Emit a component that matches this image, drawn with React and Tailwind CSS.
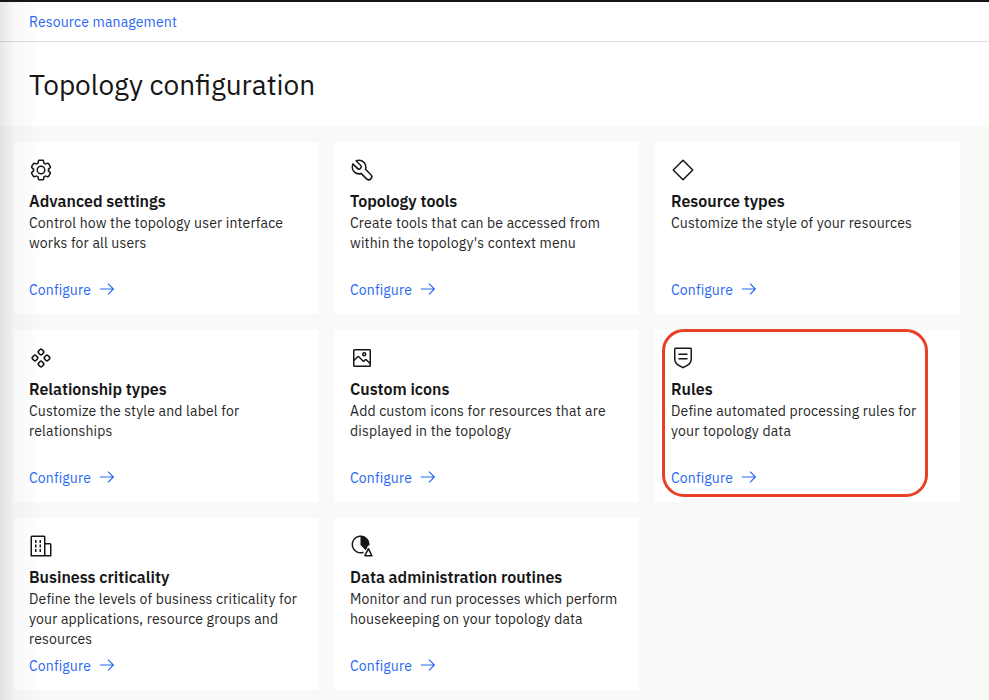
import React from "react";

const SettingsIcon = () => (
  <>
    <path d="M27,16.76c0-.25,0-.5,0-.76s0-.51,0-.77l1.92-1.68A2,2,0,0,0,29.3,11L26.94,7a2,2,0,0,0-1.73-1,2,2,0,0,0-.64.1l-2.43.82a11.35,11.35,0,0,0-1.31-.75l-.51-2.52a2,2,0,0,0-2-1.61H13.64a2,2,0,0,0-2,1.61l-.51,2.52a11.48,11.48,0,0,0-1.32.75L7.43,6.06A2,2,0,0,0,6.79,6,2,2,0,0,0,5.06,7L2.7,11a2,2,0,0,0,.41,2.51L5,15.24c0,.25,0,.5,0,.76s0,.51,0,.77L3.11,18.45A2,2,0,0,0,2.7,21L5.06,25a2,2,0,0,0,1.73,1,2,2,0,0,0,.64-.1l2.43-.82a11.35,11.35,0,0,0,1.31.75l.51,2.52a2,2,0,0,0,2,1.61h4.72a2,2,0,0,0,2-1.61l.51-2.52a11.48,11.48,0,0,0,1.32-.75l2.42.82a2,2,0,0,0,.64.1,2,2,0,0,0,1.73-1L29.3,21a2,2,0,0,0-.41-2.51ZM25.21,24l-3.43-1.16a8.86,8.86,0,0,1-2.71,1.57L18.36,28H13.64l-.71-3.55a9.36,9.36,0,0,1-2.7-1.57L6.79,24,4.43,20l2.72-2.4a8.9,8.9,0,0,1,0-3.13L4.43,12,6.79,8l3.43,1.16a8.86,8.86,0,0,1,2.71-1.57L13.64,4h4.72l.71,3.55a9.36,9.36,0,0,1,2.7,1.57L25.21,8,27.57,12l-2.72,2.4a8.9,8.9,0,0,1,0,3.13L27.57,20Z" />
    <path d="M16,22a6,6,0,1,1,6-6A5.94,5.94,0,0,1,16,22Zm0-10a3.91,3.91,0,0,0-4,4,3.91,3.91,0,0,0,4,4,3.91,3.91,0,0,0,4-4A3.91,3.91,0,0,0,16,12Z" />
  </>
);

const ToolsIcon = () => (
  <path d="M12.1,2A9.8,9.8,0,0,0,6.7,3.6L13.1,10a2.1,2.1,0,0,1,.2,3,2.1,2.1,0,0,1-3-.2L3.7,6.4A9.84,9.84,0,0,0,2,12.1,10.14,10.14,0,0,0,12.1,22.2a10.9,10.9,0,0,0,2.6-.3l6.7,6.7a5,5,0,0,0,7.1-7.1l-6.7-6.7a10.9,10.9,0,0,0,.3-2.6A10,10,0,0,0,12.1,2Zm8,10.1a7.61,7.61,0,0,1-.3,2.1l-.3,1.1.8.8,6.7,6.7a2.88,2.88,0,0,1,.9,2.1A2.72,2.72,0,0,1,27,27a2.9,2.9,0,0,1-4.2,0l-6.7-6.7-.8-.8-1.1.3a7.61,7.61,0,0,1-2.1.3,8.27,8.27,0,0,1-5.7-2.3A7.63,7.63,0,0,1,4,12.1a8.33,8.33,0,0,1,.3-2.2l4.4,4.4a4.14,4.14,0,0,0,5.9.2,4.14,4.14,0,0,0-.2-5.9L10,4.2a6.45,6.45,0,0,1,2-.3,8.27,8.27,0,0,1,5.7,2.3A8.49,8.49,0,0,1,20.1,12.1Z" />
);

const DiamondIcon = () => (
  <path d="M16 3 29 16 16 29 3 16Z" fill="none" stroke="currentColor" strokeWidth="2" strokeLinejoin="round" />
);

const ClusterIcon = () => (
  <g fill="none" stroke="currentColor" strokeWidth="2.1">
    <rect x="12.8" y="4.8" width="6.4" height="6.4" rx="1.7" transform="rotate(45 16 8)" />
    <rect x="4.8" y="12.8" width="6.4" height="6.4" rx="1.7" transform="rotate(45 8 16)" />
    <rect x="20.8" y="12.8" width="6.4" height="6.4" rx="1.7" transform="rotate(45 24 16)" />
    <rect x="12.8" y="20.8" width="6.4" height="6.4" rx="1.7" transform="rotate(45 16 24)" />
  </g>
);

const ImageIcon = () => (
  <>
    <path d="M19,14a3,3,0,1,0-3-3A3,3,0,0,0,19,14Zm0-4a1,1,0,1,1-1,1A1,1,0,0,1,19,10Z" />
    <path d="M26,4H6A2,2,0,0,0,4,6V26a2,2,0,0,0,2,2H26a2,2,0,0,0,2-2V6A2,2,0,0,0,26,4Zm0,22H6V20l5-5,5.59,5.59a2,2,0,0,0,2.82,0L21,19l5,5Zm0-4.83-3.59-3.59a2,2,0,0,0-2.82,0L18,19.17l-5.59-5.59a2,2,0,0,0-2.82,0L6,17.17V6H26Z" />
  </>
);

const RuleIcon = () => (
  <>
    <path d="M10 10H22V12H10zM10 16H22V18H10z" />
    <path d="M16,30,9.8242,26.7071A10.9818,10.9818,0,0,1,4,17V4A2.0021,2.0021,0,0,1,6,2H26a2.0021,2.0021,0,0,1,2,2V17a10.9818,10.9818,0,0,1-5.8242,9.7071ZM6,4V17a8.9852,8.9852,0,0,0,4.7656,7.9423L16,27.7333l5.2344-2.791A8.9852,8.9852,0,0,0,26,17V4Z" />
  </>
);

const BuildingIcon = () => (
  <>
    <path d="M8 8h2v4H8zM8 14h2v4H8zM14 8h2v4h-2zM14 14h2v4h-2zM8 20h2v4H8zM14 20h2v4h-2z" />
    <path d="M30,14a2,2,0,0,0-2-2H22V4a2,2,0,0,0-2-2H4A2,2,0,0,0,2,4V30H30ZM4,4H20V28H4ZM22,28V14h6V28Z" />
  </>
);

const PieIcon = () => (
  <>
    <path d="M18 24.3A11 11 0 1 1 25 14" fill="none" stroke="currentColor" strokeWidth="2" />
    <path d="M14 2.5A11.7 11.7 0 0 1 25.9 14Q25.7 16.8 24.4 18.6L20.8 21.6L14 14.5Z" />
    <path d="M24.5 19.5 29.2 29H19.8Z" fill="none" stroke="#fff" strokeWidth="4.4" />
    <path d="M24.5 19.5 29.2 29H19.8Z" fill="#fff" stroke="currentColor" strokeWidth="2.1" strokeLinejoin="round" />
  </>
);

const cards = [
  { icon: SettingsIcon, title: "Advanced settings", text: "Control how the topology user interface works for all users" },
  { icon: ToolsIcon, title: "Topology tools", text: "Create tools that can be accessed from within the topology's context menu" },
  { icon: DiamondIcon, title: "Resource types", text: "Customize the style of your resources" },
  { icon: ClusterIcon, title: "Relationship types", text: "Customize the style and label for relationships" },
  { icon: ImageIcon, title: "Custom icons", text: "Add custom icons for resources that are displayed in the topology" },
  { icon: RuleIcon, title: "Rules", text: "Define automated processing rules for your topology data", marked: true },
  { icon: BuildingIcon, title: "Business criticality", text: "Define the levels of business criticality for your applications, resource groups and resources" },
  { icon: PieIcon, title: "Data administration routines", text: "Monitor and run processes which perform housekeeping on your topology data" },
];

function Card({ icon: Icon, title, text, marked }) {
  return (
    <section className="relative flex h-[172px] flex-col bg-white p-4">
      <svg viewBox="0 0 32 32" className="size-6 shrink-0" fill="currentColor">
        <Icon />
      </svg>
      <h2 className="mt-2 text-base leading-[22px] font-semibold">{title}</h2>
      <p className="mt-px text-sm leading-5 tracking-[0.16px] text-[#262626]">{text}</p>
      <a className="mt-auto -mb-0.5 flex h-5 items-center gap-2 text-sm leading-5 tracking-[0.16px] text-[#2868f3]">
        <span>Configure</span>
        <svg viewBox="0 0 20 20" className="mb-0.5 size-4" fill="currentColor">
          <path d="M11.8 2.8 10.8 3.8 16.2 9.3 1 9.3 1 10.7 16.2 10.7 10.8 16.1 11.8 17.2 19 10z" />
        </svg>
      </a>
      {marked && (
        <div className="absolute -top-px left-[7px] h-[168px] w-[266px] rounded-[22px] border-3 border-[#ea4025]" />
      )}
    </section>
  );
}

export default function App() {
  return (
    <div className="relative h-[700px] w-[989px] overflow-hidden bg-[#f8faf7] font-['IBM_Plex_Sans','Roboto',sans-serif] text-[#161616]">
      <nav className="flex h-[42px] items-center border-t-2 border-b border-t-[#161616] border-b-[#e0e0e0] bg-white pl-[29px]">
        <a className="text-sm leading-5 tracking-[0.16px] text-[#2868f3]">Resource management</a>
      </nav>
      <header className="flex h-[84px] items-center bg-white pt-0.5 pl-[29px]">
        <h1 className="text-[28px] leading-9">Topology configuration</h1>
      </header>
      <main className="grid grid-cols-[305px_305px_305px] gap-4 pt-4 pl-[13px]">
        {cards.map((card) => (
          <Card key={card.title} {...card} />
        ))}
      </main>
      <div className="absolute top-0.5 bottom-0 left-0 w-10 bg-linear-to-r from-black/10 via-black/3 via-35% to-transparent" />
    </div>
  );
}
